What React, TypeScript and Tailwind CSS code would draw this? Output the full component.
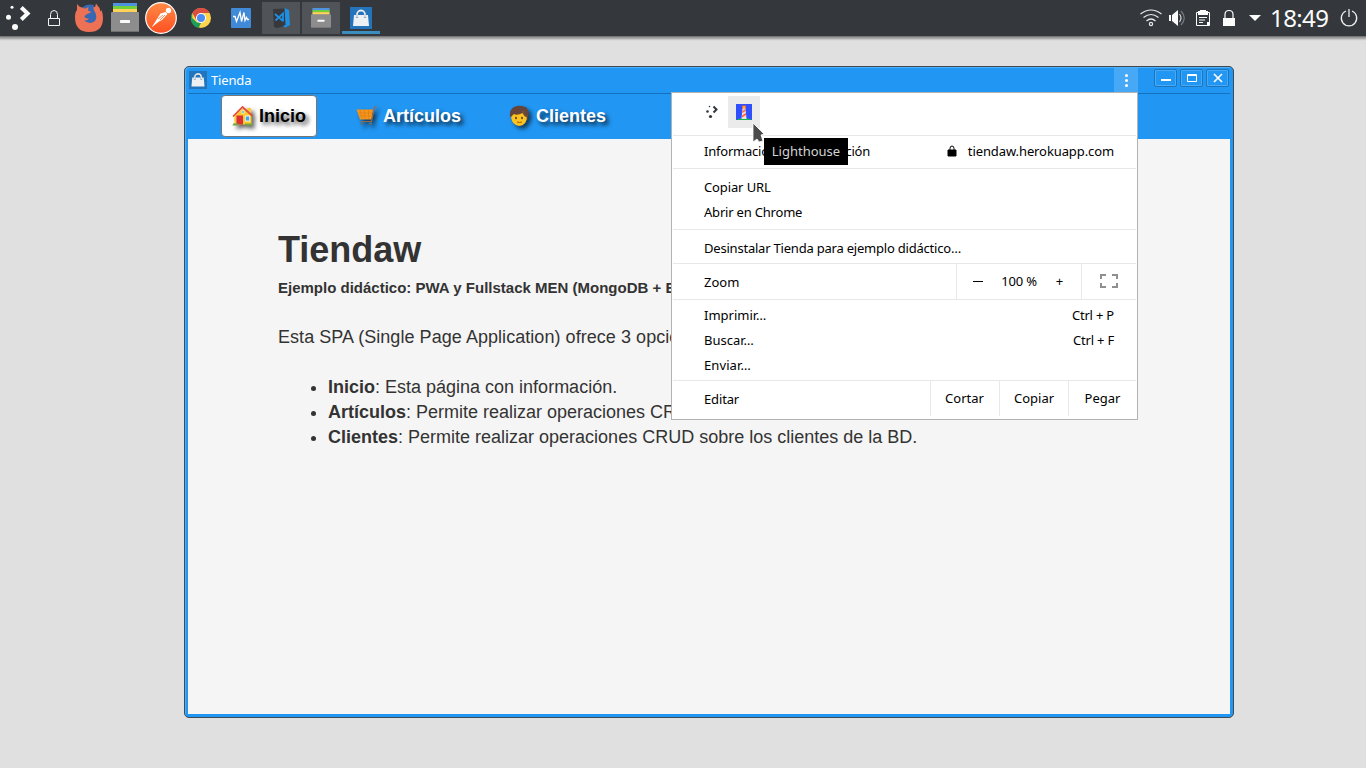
import React from 'react';

type IconProps = { x: number; w: number; h?: number; className?: string; children: React.ReactNode };

/* A slot of the top panel; its drawing uses the panel's own coordinates. */
function Slot({ x, w, h = 36, className = '', children }: IconProps) {
  return (
    <svg width={w} height={h} viewBox={`${x} 0 ${w} ${h}`} className={`block shrink-0 ${className}`}>
      {children}
    </svg>
  );
}

function Bag() {
  return (
    <svg viewBox="0 0 22 22" className="block h-full w-full">
      <rect width="22" height="22" fill="#2374bb" />
      <path d="M4 8h14l1 11H3z" fill="#eef1f4" />
      <path d="M7 11V7.5a4 4 0 0 1 8 0V11" fill="none" stroke="#8fa9c0" strokeWidth="2.2" />
      <path d="M7 10V7.5a4 4 0 0 1 8 0V10" fill="none" stroke="#eef1f4" strokeWidth="1.3" />
    </svg>
  );
}

function Files() {
  return (
    <svg viewBox="0 0 28 29" preserveAspectRatio="none" className="block h-full w-full">
      <rect x="2" y="0" width="24" height="4" fill="#4d93e0" />
      <rect x="2" y="3" width="24" height="3.5" fill="#72d03c" />
      <rect x="2" y="6" width="24" height="4" fill="#ffd35a" />
      <rect x="0" y="9" width="28" height="20" rx="1" fill="#8d8d8d" />
      <rect x="0" y="28" width="28" height="1" fill="#6f6f6f" />
      <rect x="9" y="17" width="10" height="3" rx=".7" fill="#fafafa" />
    </svg>
  );
}

function Panel() {
  return (
    <header className="relative z-10 flex h-9 shrink-0 justify-between bg-[#34383c] shadow-[0_1px_0_#777,0_2px_2px_1px_rgba(0,0,0,0.35)]">
      <div className="flex items-start">
        <Slot x={0} w={36}>
          <circle cx="12" cy="7.3" r="1.5" fill="#fcfcfc" />
          <circle cx="8.5" cy="17.2" r="2.5" fill="#fcfcfc" />
          <circle cx="15" cy="27" r="3" fill="#fcfcfc" />
          <path d="M21.3 7.500l6.300 6-6.300 6" fill="none" stroke="#fcfcfc" strokeWidth="4" />
        </Slot>
        <Slot x={36} w={36}>
          <path d="M48.5 18.500h11v7h-11zM50.500 18v-3.500q0-4 3.500-4t3.500 4V18" fill="none" stroke="#f4f4f4" />
        </Slot>
        <Slot x={72} w={36}>
          <path d="M77.500 3.800Q78.500 7.500 83 7.500L86 6l9 1 1-3.500q4 4 4.500 8l1-1.500Q103 14 103 18 103 32 89 32 75 32 75 17q0-5 2-7-.5-4 .5-6.200z" fill="#ed7154" />
          <path d="M82.500 8Q86 3.200 94 5q-1.500 4 1 7 2.500 5 0 9-5 4-11-.5 4 .5 5-2-4 0-4.500-2 .5-2 3-2.500L91.500 12 88 10.500l.5-3.500-3 1.500z" fill="#3668b4" />
        </Slot>
        <div className="h-[35px] w-[37px] px-[3px] pt-[3px]">
          <div className="h-[29px] w-7"><Files /></div>
        </div>
        <Slot x={145} w={38}>
          <defs>
            <linearGradient id="pm" x1="0" y1="0" x2="0" y2="1">
              <stop stopColor="#ff8a45" /><stop offset="1" stopColor="#ff4f22" />
            </linearGradient>
          </defs>
          <circle cx="161" cy="18" r="15.300" fill="url(#pm)" stroke="#fff" strokeWidth="1.200" />
          <circle cx="168.500" cy="10.500" r="2.700" fill="#fff" />
          <path d="M160.500 13.500l5-1.500 2 2-5.500 6-3 1.500-7.500 6 5.500-8.500z" fill="#fff" />
          <path d="M158 19l5-4m-3 5l5-5" stroke="#ff7038" strokeWidth=".8" />
        </Slot>
        <Slot x={183} w={39}>
          <circle cx="201" cy="18" r="10" fill="#fdd44c" />
          <path d="M192.300 13v5l4.700 4.500 4 .5-2.500 5A10 10 0 0 1 192.300 13z" fill="#1b9e5a" />
          <path d="M192.300 13A10 10 0 0 1 209.700 13H201l-4.300 7.500z" fill="#dc4c3f" />
          <circle cx="201" cy="18" r="5" fill="#fff" />
          <circle cx="201" cy="18" r="4" fill="#4c8bf5" />
        </Slot>
        <Slot x={222} w={40}>
          <rect x="231" y="8" width="20" height="20" rx="1" fill="#418ad8" />
          <path d="M233 16.500h2l1.500 5 3.500-9 1.500 9 2.500-9 1 8 1.500-3 1 2h1.500" fill="none" stroke="#fff" strokeWidth="1.300" />
        </Slot>
        <div className="mt-0.5 flex gap-0.5">
          <div className="h-8 w-[38px] bg-[#505458]">
            <svg viewBox="262 2 38 32" className="block h-full w-full">
              <path d="M273 9l12-.5 3 17-11 2.500-3-1z" fill="#36383c" />
              <path d="M284.500 8l4.500 2 1 15-4.500 2.500-3-1.500 3-1z" fill="#1f8fe2" />
              <path d="M275 14l8 7m-7.500-.5l7.500-7v8" fill="none" stroke="#1f8fe2" strokeWidth="1.800" />
            </svg>
          </div>
          <div className="h-8 w-[38px] bg-[#505458] px-[9px] pt-1.5">
            <div className="h-5 w-5"><Files /></div>
          </div>
          <div className="h-8 w-[38px] border-b-[3px] border-[#3b8dbd] px-2 pt-[5px]">
            <div className="h-[22px] w-[22px]"><Bag /></div>
          </div>
        </div>
      </div>
      <div className="flex text-[#fcfcfc]">
        <Slot x={1136} w={130}>
          <g fill="none" stroke="#e8e9ea" strokeWidth="1.200">
            <path d="M1140.500 14q10.500-8 21 0M1143.500 17.500q7.500-6 15 0M1146.500 21q4.500-4 9 0" />
            <circle cx="1151" cy="24" r="1.600" />
          </g>
          <path d="M1169 15h2v6h-2zM1172 15l6-5v16l-6-5z" fill="#fcfcfc" />
          <path d="M1179.500 14q3 4 0 8" fill="none" stroke="#d0d2d3" strokeWidth="1.200" />
          <path d="M1181 11q6.500 7 0 14" fill="none" stroke="#777a7e" strokeWidth="1.200" />
          <path d="M1196.500 12.500h13v13h-13z" fill="none" stroke="#fcfcfc" />
          <path d="M1198 11h2v-1h6v1h2v4h-10zM1199 17h8v1h-8zM1199 19.500h6v1h-6zM1199 22h4v1h-4zM1207 25v-3h3v3z" fill="#fcfcfc" />
          <rect x="1223" y="18" width="12" height="8" fill="#fcfcfc" />
          <path d="M1225 18v-3.500q0-4 4-4t4 4V18" fill="none" stroke="#fcfcfc" strokeWidth="1.200" />
          <path d="M1249 15h12l-6 6z" fill="#fcfcfc" />
        </Slot>
        <span className="w-[70px] pl-1 font-['Noto_Sans',sans-serif] text-[24px] leading-9 tracking-[-0.600px]">18:49</span>
        <Slot x={1336} w={30}>
          <path d="M1346 11a7.700 7.700 0 1 0 6 0M1349 9v8" fill="none" stroke="#eee" strokeWidth="1.300" />
        </Slot>
      </div>
    </header>
  );
}

const iconShadow = 'drop-shadow-[3px_3px_2px_rgba(0,0,0,0.6)]';

function House() {
  return (
    <svg width="22" height="22" viewBox="0 0 22 22" className={`block shrink-0 ${iconShadow}`}>
      <path d="M15.500 3h3.500v8h-3.500z" fill="#fdc92c" />
      <path d="M2.500 11L10.500 3.500l9 7v9h-17z" fill="#fdc92c" />
      <path d="M1 11.500L10.500 2l10 9" fill="none" stroke="#e34b3d" strokeWidth="1.700" />
      <path d="M4.500 10.500h6.500v9H4.500z" fill="#d92f35" />
      <path d="M13 10.500h5v6h-5zM9.500 5.500h3v3h-3z" fill="#e9f5fc" />
      <path d="M13.800 11.500h3.400v4h-3.400zM10.200 6.200h1.600v1.600h-1.600z" fill="#43a5dd" />
      <path d="M.5 20.500q0-3 4-2h2v2zM13 18.500h7v2h-7z" fill="#72a83c" />
    </svg>
  );
}

function Cart() {
  return (
    <svg width="22" height="22" viewBox="0 0 22 22" className={`block shrink-0 ${iconShadow}`}>
      <path d="M.5 4.500h16.500l-1.500 10H4z" fill="#f7941d" />
      <path d="M4 5l2 9m2-9l1 9m3.500-9v9M2 8h14M3 11h13" stroke="#d67c14" strokeWidth=".6" />
      <path d="M21 2h-2.500L15.500 16.500H5" fill="none" stroke="#9b6a45" strokeWidth="1.200" />
      <circle cx="6" cy="18.500" r="1.500" fill="#5b6f7a" />
      <circle cx="14.500" cy="18.500" r="1.500" fill="#5b6f7a" />
    </svg>
  );
}

function Person() {
  return (
    <svg width="22" height="22" viewBox="0 0 22 22" className={`block shrink-0 ${iconShadow}`}>
      <path d="M1 11Q0 2 9 .8q9-1 10.500 6 .5 4-1 8H4z" fill="#65443b" />
      <path d="M2 12l4-4.500q6 2 8-1l4 5q0 9-8 9.500Q3 20 2 12z" fill="#fcc21d" />
      <path d="M1.500 12q0-5 7-6 8-1 10 7l-3-2-2-3q-5 3-9 1z" fill="#65443b" />
      <path d="M7 12.500v1m6-1v1" stroke="#4b332d" strokeWidth="1.600" strokeLinecap="round" />
      <path d="M8 17q2.500 1 5 0" fill="none" stroke="#a55c18" />
    </svg>
  );
}

function Navbar() {
  const item = 'flex h-[42px] items-center gap-[5px] rounded border pl-2.5 text-[18px] font-bold';
  return (
    <nav className="flex h-[45px] items-start bg-[#2196f3] pl-[33px] pt-px font-['Liberation_Sans',Arial,sans-serif]">
      <a className={`${item} w-24 border-[#777] bg-white text-black [text-shadow:3px_3px_4px_#000a]`}><House /><span>Inicio</span></a>
      <a className={`${item} ml-7 w-[126px] border-transparent text-white [text-shadow:3px_3px_4px_#000c]`}><Cart /><span>Artículos</span></a>
      <a className={`${item} ml-[27px] border-transparent text-white [text-shadow:3px_3px_4px_#000c]`}><Person /><span>Clientes</span></a>
    </nav>
  );
}

function WindowButton({ children }: { children: React.ReactNode }) {
  return (
    <button className="h-[18px] w-[23px] rounded-[2px] border border-[#1976bd] shadow-[inset_0_0_0_1px_#4aaaf5]">
      <svg width="21" height="16" viewBox="0 0 21 16" className="block" fill="none">{children}</svg>
    </button>
  );
}

function TitleBar() {
  return (
    <div className="flex h-[27px] border-b border-[#1471bd] pl-px">
      <div className="mt-1 h-[18px] w-[18px]"><Bag /></div>
      <span className="ml-1 font-['Noto_Sans',sans-serif] text-[13px] leading-[27px] tracking-[-0.150px] text-white">Tienda</span>
      <div className="ml-auto mt-px flex h-[25px] w-6 flex-col items-center justify-center gap-0.5 bg-[#47a8f5]">
        <i className="size-[3px] rounded-full bg-white" /><i className="size-[3px] rounded-full bg-white" /><i className="size-[3px] rounded-full bg-white" />
      </div>
      <div className="flex gap-[3px] pl-4 pr-px pt-0.5">
        <WindowButton><path d="M6 9h10v2H6z" fill="#fff" /></WindowButton>
        <WindowButton><path d="M6.500 4.500h9v7h-9zM6 5.500h10" stroke="#fff" /></WindowButton>
        <WindowButton><path d="M7 4l8 8m0-8l-8 8" stroke="#fff" strokeWidth="1.700" /></WindowButton>
      </div>
    </div>
  );
}

function Content() {
  return (
    <main className="flex-1 whitespace-nowrap bg-[#f5f5f5] pl-[90px] pt-[91px] font-['Liberation_Sans',Arial,sans-serif] text-[18px] leading-[25px] text-[#333]">
      <h1 className="text-[36px] font-bold leading-10">Tiendaw</h1>
      <h2 className="mt-2 text-[15px] font-bold leading-5">Ejemplo didáctico: PWA y Fullstack MEN (MongoDB + Express + Node)</h2>
      <p className="mt-[27px] tracking-[0.050px]">Esta SPA (Single Page Application) ofrece 3 opciones:</p>
      <ul className="mt-[25px] list-disc pl-[50px]">
        <li><b>Inicio</b>: Esta página con información.</li>
        <li><b>Artículos</b>: Permite realizar operaciones CRUD sobre los artículos de la BD.</li>
        <li><b>Clientes</b>: Permite realizar operaciones CRUD sobre los clientes de la BD.</li>
      </ul>
    </main>
  );
}

function Row({ label, hint, className = '' }: { label: string; hint?: React.ReactNode; className?: string }) {
  return (
    <div className="flex h-[25px] items-center justify-between pl-[31px] pr-[22px]">
      <span className={className}>{label}</span>{hint && <span className="flex items-center tracking-[-0.100px]">{hint}</span>}
    </div>
  );
}

function Menu() {
  return (
    <div className="absolute left-[671px] top-[92px] z-20 flex h-[328px] w-[467px] flex-col border border-[#b2b2b2] bg-white px-px font-['Noto_Sans',sans-serif] text-[13px] text-black">
      <div className="flex h-[43px] items-start border-b border-[#e8e8e8] pl-[23px] pt-[3px]">
        <svg width="32" height="32" viewBox="696 96 32 32" fill="#33373b">
          <circle cx="709.500" cy="106.500" r=".8" /><circle cx="707.500" cy="111.500" r="1.300" /><circle cx="710.500" cy="116.500" r="1.600" />
          <path d="M713.500 106.500l3 3-3 3" fill="none" stroke="#33373b" strokeWidth="2" />
        </svg>
        <div className="flex size-8 items-center justify-center bg-[#ebebeb]">
          <svg width="16" height="16" viewBox="0 0 16 16">
            <rect width="16" height="16" fill="#304ffe" />
            <path d="M0 16q8-4 16 0z" fill="#16b54b" />
            <path d="M6.500 4h3l1 11h-5z" fill="#eee0e4" />
            <path d="M6 1.500h4v3H6z" fill="#ff6534" />
            <path d="M7 2.500h2V4H7z" fill="#ffd24a" />
            <path d="M6.500 7l3-2v2l-3.200 2zM6 11.500l4-2.500v2l-4 2.500z" fill="#ff6534" />
          </svg>
        </div>
      </div>
      <div className="h-[33px] border-b border-[#e8e8e8] pt-[3px]">
        <Row label="Información de la aplicación" className="tracking-[-0.220px]" hint={<>
          <svg width="10" height="12" viewBox="0 0 10 12" className="-mt-0.5 mr-[11px]"><path d="M1 5h8v6H1z" fill="#000" stroke="#000" /><path d="M3 5V3.500q0-2.500 2-2.500t2 2.500V5" fill="none" stroke="#000" /></svg>
          tiendaw.herokuapp.com</>} />
      </div>
      <div className="h-[61px] border-b border-[#e8e8e8] pt-1.5">
        <Row label="Copiar URL" className="tracking-[-0.120px]" />
        <Row label="Abrir en Chrome" className="tracking-[-0.200px]" />
      </div>
      <div className="h-[34px] border-b border-[#e8e8e8] pt-1.5"><Row label="Desinstalar Tienda para ejemplo didáctico…" className="tracking-[-0.210px]" /></div>
      <div className="flex h-9 items-stretch border-b border-[#e8e8e8] leading-[35px]">
        <span className="w-[283px] pl-[31px] pt-px">Zoom</span>
        <div className="flex w-[125px] border-l border-[#e8e8e8]">
          <span className="flex w-[41px] items-center justify-center"><i className="h-px w-2.5 bg-black" /></span>
          <span className="w-[42px] text-center tracking-[-0.200px]">100 %</span>
          <span className="w-[39px] text-center">+</span>
        </div>
        <div className="flex flex-1 items-center justify-center border-l border-[#e8e8e8]">
          <svg width="18" height="14" viewBox="0 0 18 14" fill="none" stroke="#8f8f8f" strokeWidth="2" className="-mt-0.5"><path d="M1 5V1h5M12 1h5v4M17 9v4h-5M6 13H1V9" /></svg>
        </div>
      </div>
      <div className="h-[81px] border-b border-[#e8e8e8] pt-[3px]">
        <Row label="Imprimir…" hint={<span className="tracking-[-0.200px]">Ctrl + P</span>} />
        <Row label="Buscar…" hint={<span className="tracking-[-0.200px]">Ctrl + F</span>} />
        <Row label="Enviar…" className="tracking-[0.100px]" />
      </div>
      <div className="flex h-[35px] leading-[35px]">
        <span className="w-[257px] pl-[31px] pt-px tracking-[-0.150px]">Editar</span>
        <span className="w-[69px] border-l border-[#e8e8e8] pr-px text-center">Cortar</span>
        <span className="w-[69px] border-l border-[#e8e8e8] text-center">Copiar</span>
        <span className="flex-1 border-l border-[#e8e8e8] text-center">Pegar</span>
      </div>
    </div>
  );
}

export default function App() {
  return (
    <div className="relative flex h-screen w-full flex-col overflow-hidden bg-[#e0e0e0]">
      <Panel />
      <section className="ml-[184px] mt-[30px] flex h-[652px] w-[1050px] flex-col rounded-[5px] border border-[#3f4a52] bg-[#2196f3] px-[3px] pb-[3px] shadow-[inset_1px_1px_0_#4fb0fa]">
        <TitleBar />
        <Navbar />
        <Content />
      </section>
      <Menu />
      <div className="absolute left-[764px] top-[138px] z-30 h-[27px] w-[84px] bg-black text-center font-['Noto_Sans',sans-serif] text-[13px] leading-[27px] text-[#d4d4d4]">Lighthouse</div>
      <svg width="14" height="24" viewBox="0 0 14 24" className="absolute left-[752px] top-[122px] z-40">
        <path d="M1 1l11 11-3 1 2 6-4 1-2-3-4 3z" fill="#4b4b4b" stroke="#fff" strokeWidth=".8" />
      </svg>
    </div>
  );
}
